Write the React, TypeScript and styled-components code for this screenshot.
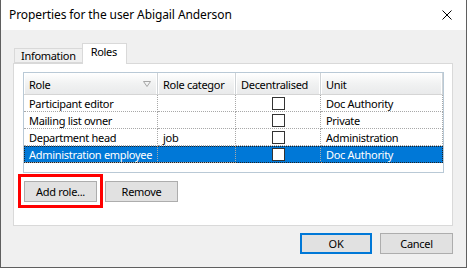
import React from "react";
import styled, { createGlobalStyle } from "styled-components";

const Global = createGlobalStyle`
  html, body { margin: 0; padding: 0; background: #fff; }
  body { font-family: "Noto Sans", "Open Sans", sans-serif; font-size: 11px; letter-spacing: -0.3px; color: #000; }
  * { box-sizing: border-box; }
`;

const Window = styled.div`
  width: 467px;
  height: 268px;
  border: 1px solid #5f5f5f;
  border-top: none;
  background: #f0f0f0;
  display: flex;
  flex-direction: column;
`;

const TitleBar = styled.div`
  height: 30px;
  background: #fff;
  display: flex;
  align-items: center;
  justify-content: space-between;
  padding: 0 9px 0 8px;
  font-size: 12px;
`;

const Title = styled.span`
  margin-top: -1px;
  letter-spacing: -0.1px;
`;

const CloseIcon = styled.svg`
  width: 10px;
  height: 10px;
  margin-right: 5px;
`;

const Body = styled.div`
  flex: 1;
  display: flex;
  flex-direction: column;
  padding: 13px 13px 0 12px;
`;

const TabStrip = styled.div`
  display: flex;
  align-items: flex-end;
  padding-left: 1px;
  height: 20px;
  position: relative;
  z-index: 1;
`;

const Tab = styled.div<{ $active?: boolean }>`
  height: ${(p) => (p.$active ? 21 : 15)}px;
  margin-bottom: ${(p) => (p.$active ? -1 : 0)}px;
  padding: ${(p) => (p.$active ? "1px 9px 0 8px" : "0 6px 0 6px")};
  background: ${(p) => (p.$active ? "#fff" : "#f0f0f0")};
  border: 1px solid #d9d9d9;
  border-bottom: ${(p) => (p.$active ? "none" : "1px solid #d9d9d9")};
  ${(p) => (p.$active ? "" : "border-right: none;")}
  display: flex;
  align-items: ${(p) => (p.$active ? "flex-start" : "center")};
  font-size: 11px;
  line-height: 14px;
  color: #000;
`;

const Panel = styled.div`
  height: 163px;
  background: #fff;
  border: 1px solid #d9d9d9;
  padding: 8px 0 0 9px;
  display: flex;
  flex-direction: column;
`;

const Grid = styled.div`
  width: 421px;
  height: 101px;
  border: 1px solid #b9c9d6;
  background: #fff;
  display: flex;
  flex-direction: column;
`;

const cols = "134px 78px 85px 122px";

const HeaderRow = styled.div`
  display: grid;
  grid-template-columns: ${cols};
  height: 22px;
`;

const HeaderCell = styled.div`
  position: relative;
  display: flex;
  align-items: center;
  padding-left: 5px;
  background: linear-gradient(#ffffff, #f1f2f2 50%, #e9eaeb);
  border-right: 1px solid #cfd3d6;
  border-bottom: 1px solid #d5d5d5;
  box-shadow: inset -1px 0 0 #ffffff, inset 1px 0 0 #ffffff;
  font-size: 11px;
  padding-top: 1px;
`;

const SortGlyph = styled.svg`
  position: absolute;
  right: 6px;
  top: 8px;
  width: 8px;
  height: 6px;
`;

const Row = styled.div<{ $selected?: boolean }>`
  display: grid;
  grid-template-columns: ${cols};
  height: 17px;
  position: relative;
  background: ${(p) => (p.$selected ? "#0078d7" : "#fff")};
  color: ${(p) => (p.$selected ? "#fff" : "#000")};
  ${(p) =>
    p.$selected
      ? `outline: 1px dotted #222; outline-offset: -1px;`
      : ""}
`;

const Cell = styled.div<{ $center?: boolean }>`
  display: flex;
  align-items: center;
  justify-content: ${(p) => (p.$center ? "center" : "flex-start")};
  padding-left: ${(p) => (p.$center ? 0 : 5)}px;
  border-right: 1px dotted #a8a8a8;
  border-bottom: 1px dotted #a8a8a8;
  font-size: 11px;
  white-space: nowrap;
  overflow: hidden;
`;

const Check = styled.span`
  width: 13px;
  height: 13px;
  border: 1px solid #333;
  background: #fff;
  display: block;
`;

const ButtonRow = styled.div`
  display: flex;
  gap: 8px;
  margin-top: 8px;
  padding-left: 1px;
`;

const Button = styled.button<{ $default?: boolean; $mark?: boolean }>`
  position: relative;
  width: ${(p) => (p.$default ? 72 : 73)}px;
  height: 21px;
  background: #e1e1e1;
  border: ${(p) => (p.$default ? "2px solid #0078d7" : "1px solid #adadad")};
  font-family: inherit;
  font-size: 11px;
  letter-spacing: -0.3px;
  color: #000;
  padding: 0;
  ${(p) =>
    p.$mark
      ? `&::after {
          content: "";
          position: absolute;
          top: -8px; left: -7px; right: -7px; bottom: -7px;
          border: 3px solid #ff0000;
        }`
      : ""}
`;

const Footer = styled.div`
  display: flex;
  justify-content: flex-end;
  gap: 8px;
  margin-top: 7px;
`;

const rows = [
  { role: "Participant editor", cat: "", unit: "Doc Authority" },
  { role: "Mailing list ovner", cat: "", unit: "Private" },
  { role: "Department head", cat: "job", unit: "Administration" },
  { role: "Administration employee", cat: "", unit: "Doc Authority", sel: true },
];

export default function App() {
  return (
    <>
      <Global />
      <Window>
        <TitleBar>
          <Title>Properties for the user Abigail Anderson</Title>
          <CloseIcon viewBox="0 0 10 10">
            <path d="M0.5 0.5 L9.5 9.5 M9.5 0.5 L0.5 9.5" stroke="#000" strokeWidth="1" />
          </CloseIcon>
        </TitleBar>
        <Body>
          <TabStrip>
            <Tab>Infomation</Tab>
            <Tab $active>Roles</Tab>
          </TabStrip>
          <Panel>
            <Grid>
              <HeaderRow>
                <HeaderCell>
                  Role
                  <SortGlyph viewBox="0 0 8 6">
                    <path d="M0.5 0.5 H7.5 L4 5.5 Z" fill="none" stroke="#a5a5a5" strokeWidth="1" />
                  </SortGlyph>
                </HeaderCell>
                <HeaderCell>Role categor</HeaderCell>
                <HeaderCell>Decentralised</HeaderCell>
                <HeaderCell>Unit</HeaderCell>
              </HeaderRow>
              {rows.map((r) => (
                <Row key={r.role} $selected={r.sel}>
                  <Cell>{r.role}</Cell>
                  <Cell>{r.cat}</Cell>
                  <Cell $center>
                    <Check />
                  </Cell>
                  <Cell>{r.unit}</Cell>
                </Row>
              ))}
            </Grid>
            <ButtonRow>
              <Button $mark>Add role...</Button>
              <Button>Remove</Button>
            </ButtonRow>
          </Panel>
          <Footer>
            <Button $default>OK</Button>
            <Button>Cancel</Button>
          </Footer>
        </Body>
      </Window>
    </>
  );
}
